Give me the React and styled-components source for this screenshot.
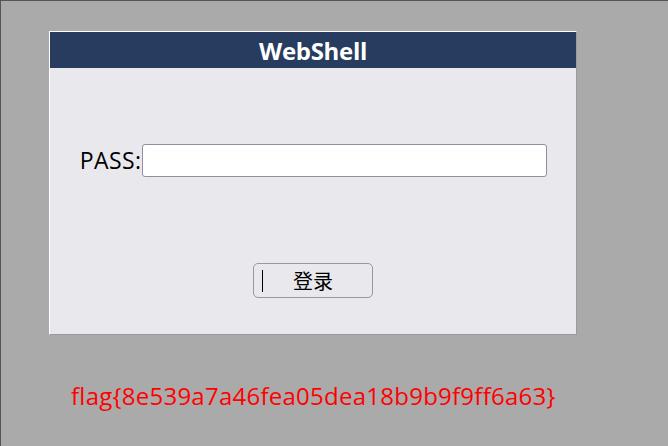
import React from "react";
import styled, { createGlobalStyle } from "styled-components";

const GlobalStyle = createGlobalStyle`
  html, body {
    margin: 0;
    padding: 0;
    background: #aaaaaa;
  }
  body {
    font-family: "Open Sans", "Noto Sans", "Noto Sans CJK SC", sans-serif;
  }
`;

const Page = styled.div`
  box-sizing: border-box;
  width: 668px;
  height: 446px;
  background: #aaaaaa;
  border-top: 1px solid #555555;
  border-left: 1px solid #555555;
  padding: 30px 0 0 48px;
`;

const Panel = styled.div`
  box-sizing: border-box;
  width: 528px;
  height: 304px;
  background: #e9e8ed;
  border-top: 1px solid #ffffff;
  border-left: 1px solid #ffffff;
  border-right: 1px solid #9a9a9a;
  border-bottom: 1px solid #9a9a9a;
  display: flex;
  flex-direction: column;
`;

const Header = styled.div`
  height: 36px;
  background: #273c5e;
  color: #ffffff;
  font-weight: 700;
  font-size: 24px;
  letter-spacing: -0.3px;
  display: flex;
  align-items: center;
  justify-content: center;
`;

const Form = styled.div`
  flex: 1;
  display: flex;
  flex-direction: column;
  align-items: center;
  padding-top: 76px;
`;

const Row = styled.div`
  display: flex;
  align-items: center;
`;

const Label = styled.label`
  width: 62px;
  font-size: 23px;
  letter-spacing: 0.4px;
  text-align: right;
  color: #000000;
  line-height: 1;
  white-space: nowrap;
`;

const Input = styled.input`
  box-sizing: border-box;
  width: 405px;
  height: 33px;
  border: 1px solid #8f8f9d;
  border-radius: 3px;
  background: #ffffff;
  outline: none;
  padding: 0 6px;
`;

const Button = styled.button`
  position: relative;
  box-sizing: border-box;
  margin-top: 86px;
  width: 120px;
  height: 35px;
  border: 1px solid #999999;
  border-radius: 5px;
  background: #e9e8ed;
  font-family: "Noto Sans CJK SC", sans-serif;
  font-size: 20px;
  color: #000000;
  padding: 0;
  &::before {
    content: "";
    position: absolute;
    left: 8px;
    top: 6px;
    width: 1px;
    height: 22px;
    background: #000000;
  }
`;

const Flag = styled.div`
  margin: 46px 0 0 22px;
  color: #ff0000;
  font-size: 24px;
  letter-spacing: 0.25px;
  line-height: 30px;
`;

export default function App() {
  return (
    <>
      <GlobalStyle />
      <Page>
        <Panel>
          <Header>WebShell</Header>
          <Form>
            <Row>
              <Label>PASS:</Label>
              <Input type="password" />
            </Row>
            <Button>登录</Button>
          </Form>
        </Panel>
        <Flag>flag{"{"}8e539a7a46fea05dea18b9b9f9ff6a63{"}"}</Flag>
      </Page>
    </>
  );
}
